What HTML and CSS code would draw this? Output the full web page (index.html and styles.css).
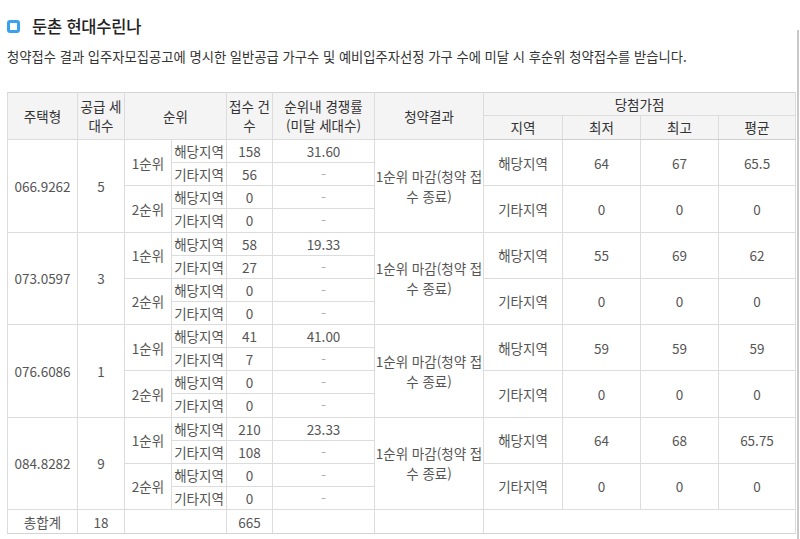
FILE: index.html
```html
<!DOCTYPE html>
<html lang="ko">
<head>
<meta charset="utf-8">
<link rel="stylesheet" href="styles.css">
</head>
<body>
<div class="page">
  <h2 class="title"><span class="title-icon"></span>둔촌 현대수린나</h2>
  <p class="desc">청약접수 결과 입주자모집공고에 명시한 일반공급 가구수 및 예비입주자선정 가구 수에 미달 시 후순위 청약접수를 받습니다.</p>
  <table class="result">
    <colgroup>
      <col class="c1"><col class="c2"><col class="c3"><col class="c4"><col class="c5"><col class="c6"><col class="c7"><col class="c8"><col class="c9"><col class="c10"><col class="c11">
    </colgroup>
    <thead>
      <tr class="h1">
        <th rowspan="2">주택형</th>
        <th rowspan="2">공급 세<br>대수</th>
        <th rowspan="2" colspan="2">순위</th>
        <th rowspan="2">접수 건<br>수</th>
        <th rowspan="2">순위내 경쟁률<br>(미달 세대수)</th>
        <th rowspan="2">청약결과</th>
        <th colspan="4">당첨가점</th>
      </tr>
      <tr class="h2">
        <th>지역</th><th>최저</th><th>최고</th><th>평균</th>
      </tr>
    </thead>
    <tbody>
      <tr>
        <td rowspan="4">066.9262</td><td rowspan="4">5</td>
        <td rowspan="2">1순위</td><td>해당지역</td><td>158</td><td>31.60</td>
        <td rowspan="4" class="res">1순위 마감(청약 접<br>수 종료)</td>
        <td rowspan="2">해당지역</td><td rowspan="2">64</td><td rowspan="2">67</td><td rowspan="2">65.5</td>
      </tr>
      <tr><td>기타지역</td><td>56</td><td class="dash">-</td></tr>
      <tr>
        <td rowspan="2">2순위</td><td>해당지역</td><td>0</td><td class="dash">-</td>
        <td rowspan="2">기타지역</td><td rowspan="2">0</td><td rowspan="2">0</td><td rowspan="2">0</td>
      </tr>
      <tr><td>기타지역</td><td>0</td><td class="dash">-</td></tr>

      <tr>
        <td rowspan="4">073.0597</td><td rowspan="4">3</td>
        <td rowspan="2">1순위</td><td>해당지역</td><td>58</td><td>19.33</td>
        <td rowspan="4" class="res">1순위 마감(청약 접<br>수 종료)</td>
        <td rowspan="2">해당지역</td><td rowspan="2">55</td><td rowspan="2">69</td><td rowspan="2">62</td>
      </tr>
      <tr><td>기타지역</td><td>27</td><td class="dash">-</td></tr>
      <tr>
        <td rowspan="2">2순위</td><td>해당지역</td><td>0</td><td class="dash">-</td>
        <td rowspan="2">기타지역</td><td rowspan="2">0</td><td rowspan="2">0</td><td rowspan="2">0</td>
      </tr>
      <tr><td>기타지역</td><td>0</td><td class="dash">-</td></tr>

      <tr>
        <td rowspan="4">076.6086</td><td rowspan="4">1</td>
        <td rowspan="2">1순위</td><td>해당지역</td><td>41</td><td>41.00</td>
        <td rowspan="4" class="res">1순위 마감(청약 접<br>수 종료)</td>
        <td rowspan="2">해당지역</td><td rowspan="2">59</td><td rowspan="2">59</td><td rowspan="2">59</td>
      </tr>
      <tr><td>기타지역</td><td>7</td><td class="dash">-</td></tr>
      <tr>
        <td rowspan="2">2순위</td><td>해당지역</td><td>0</td><td class="dash">-</td>
        <td rowspan="2">기타지역</td><td rowspan="2">0</td><td rowspan="2">0</td><td rowspan="2">0</td>
      </tr>
      <tr><td>기타지역</td><td>0</td><td class="dash">-</td></tr>

      <tr>
        <td rowspan="4">084.8282</td><td rowspan="4">9</td>
        <td rowspan="2">1순위</td><td>해당지역</td><td>210</td><td>23.33</td>
        <td rowspan="4" class="res">1순위 마감(청약 접<br>수 종료)</td>
        <td rowspan="2">해당지역</td><td rowspan="2">64</td><td rowspan="2">68</td><td rowspan="2">65.75</td>
      </tr>
      <tr><td>기타지역</td><td>108</td><td class="dash">-</td></tr>
      <tr>
        <td rowspan="2">2순위</td><td>해당지역</td><td>0</td><td class="dash">-</td>
        <td rowspan="2">기타지역</td><td rowspan="2">0</td><td rowspan="2">0</td><td rowspan="2">0</td>
      </tr>
      <tr><td>기타지역</td><td>0</td><td class="dash">-</td></tr>
    </tbody>
    <tfoot>
      <tr class="total">
        <td>총합계</td><td>18</td><td colspan="2"></td><td>665</td><td></td><td></td><td colspan="4"></td>
      </tr>
    </tfoot>
  </table>
</div>
<div class="scrollbar"></div>
</body>
</html>
```

FILE: styles.css
```css
html, body {
  margin: 0;
  padding: 0;
  background: #fff;
}
body {
  font-family: "Noto Sans CJK KR", "Noto Sans", sans-serif;
  color: #555;
  overflow: hidden;
}
.page {
  padding: 16px 5px 0 7px;
}
.title {
  display: flex;
  align-items: center;
  margin: 0;
  height: 19px;
  font-size: 16.5px;
  font-weight: 500;
  color: #222;
  letter-spacing: -0.2px;
}
.title-icon {
  flex: none;
  width: 13px;
  height: 13px;
  box-sizing: border-box;
  border-radius: 3px;
  background: #fff;
  border: 3.5px solid #3aa1ec;
  margin-right: 12px;
  margin-top: 1px;
}
.desc {
  margin: 12px 0 0 0;
  font-size: 13.3px;
  line-height: 19px;
  color: #333;
}
.result {
  margin-top: 26px;
  width: 788px;
  border-collapse: collapse;
  table-layout: fixed;
  font-size: 13.5px;
}
.c1 { width: 70px; }
.c2 { width: 47px; }
.c3 { width: 47px; }
.c4 { width: 55px; }
.c5 { width: 46px; }
.c6 { width: 102px; }
.c7 { width: 109px; }
.c8 { width: 79px; }
.c9 { width: 78px; }
.c10 { width: 78px; }
.c11 { width: 77px; }
.result th, .result td {
  border: 1px solid #dcdcdc;
  text-align: center;
  vertical-align: middle;
  padding: 0;
  line-height: 18px;
  white-space: nowrap;
  overflow: hidden;
}
.result th {
  background: #f4f4f4;
  color: #333;
  font-weight: 400;
  line-height: 19px;
}
.result thead tr.h1 { height: 23px; }
.result thead tr.h2 { height: 24px; }
.result thead tr.h2 th { border-bottom: 1px solid #cfcfcf; }
.result thead tr.h1 th { border-top: 1px solid #d4d4d4; }
.result tbody tr { height: 23.13px; }
.result td { color: #555; }
.result td.dash { color: #aaa; }
.result td.res { line-height: 20px; }
.result tr.total { height: 24px; }
.result tr.total td { border-bottom: 1px solid #d4d4d4; }
.scrollbar {
  position: absolute;
  right: 1px;
  top: 30px;
  bottom: 0;
  width: 2px;
  background: #c9c9c9;
}
```
